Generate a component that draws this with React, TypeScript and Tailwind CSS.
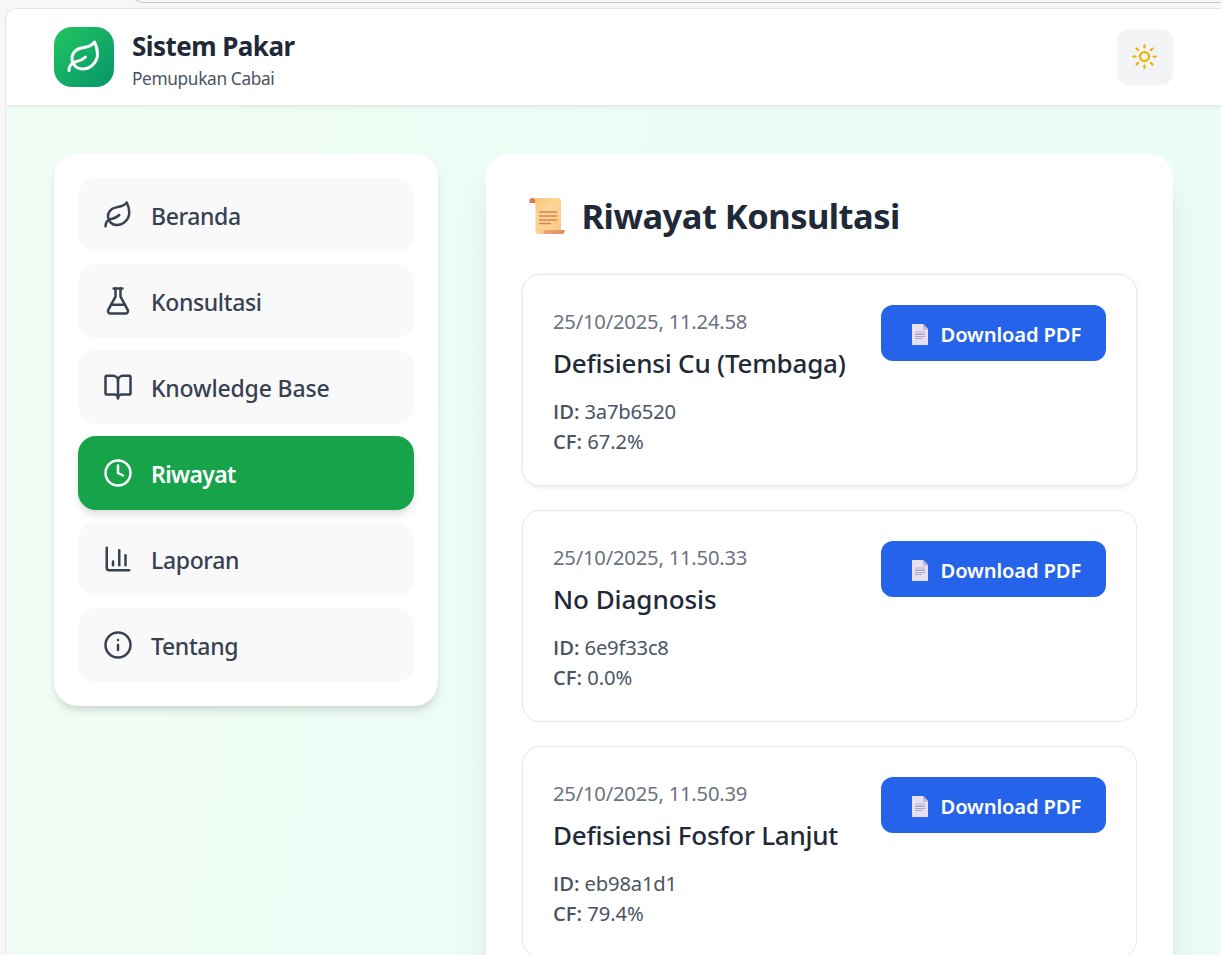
import { BookOpen, ChartColumn, Clock, FlaskConical, Info, Leaf, Sun, type LucideIcon } from "lucide-react";

type NavItem = { label: string; icon: LucideIcon; tracking: string; active?: boolean };

const navItems: NavItem[] = [
  { label: "Beranda", icon: Leaf, tracking: "tracking-[-0.4px]" },
  { label: "Konsultasi", icon: FlaskConical, tracking: "tracking-[-0.35px]" },
  { label: "Knowledge Base", icon: BookOpen, tracking: "tracking-[-0.17px]" },
  { label: "Riwayat", icon: Clock, tracking: "tracking-[-0.65px]", active: true },
  { label: "Laporan", icon: ChartColumn, tracking: "tracking-[-0.35px]" },
  { label: "Tentang", icon: Info, tracking: "tracking-[-0.35px]" },
];

type Consultation = {
  date: string;
  diagnosis: string;
  id: string;
  cf: string;
  nameTracking: string;
  idTracking: string;
  raised?: boolean;
};

const history: Consultation[] = [
  { date: "25/10/2025, 11.24.58", diagnosis: "Defisiensi Cu (Tembaga)", id: "3a7b6520", cf: "67.2%", nameTracking: "tracking-[-0.22px]", idTracking: "tracking-[-0.22px]", raised: true },
  { date: "25/10/2025, 11.50.33", diagnosis: "No Diagnosis", id: "6e9f33c8", cf: "0.0%", nameTracking: "tracking-[-0.06px]", idTracking: "tracking-[-0.2px]" },
  { date: "25/10/2025, 11.50.39", diagnosis: "Defisiensi Fosfor Lanjut", id: "eb98a1d1", cf: "79.4%", nameTracking: "tracking-[-0.25px]", idTracking: "tracking-[-0.18px]" },
];

function ScrollIcon() {
  return (
    <svg width="36" height="36" viewBox="0 0 36 36" className="shrink-0" aria-hidden="true">
      <defs>
        <linearGradient id="paper" x1="0" y1="0" x2="1" y2="1">
          <stop offset="0" stopColor="#fbc475" />
          <stop offset="0.45" stopColor="#fdd597" />
          <stop offset="1" stopColor="#fbc881" />
        </linearGradient>
        <linearGradient id="roll" x1="0" y1="0" x2="1" y2="0">
          <stop offset="0" stopColor="#f0a873" />
          <stop offset="1" stopColor="#e08a63" />
        </linearGradient>
      </defs>
      <path d="M3 0h25.500c2.200 0 3.500 1.300 3.500 3.500V33c0 2-1.200 3-3 3H9.500C7.500 36 6.500 35 6.500 33V4.500C6.500 1.500 5.500 0 3 0Z" fill="url(#paper)" />
      <path d="M3.4 0C5.500 0 6.500 2 6.500 5H.6C-.2 2 .8 0 3.4 0Z" fill="#d27c58" />
      <path d="M15 32h20.600c.5 2.500-.6 4-3 4H12c1.800 0 3-1.300 3-4Z" fill="url(#roll)" />
      <path d="M10 14h18M10 18h18M10 22h18M10 25.500h12" stroke="#d9845c" strokeWidth="1.400" />
    </svg>
  );
}

function DocumentIcon() {
  return (
    <svg width="16" height="21" viewBox="0 0 16 21" className="shrink-0" aria-hidden="true">
      <path d="M0 .5Q0 0 .5 0H11l5 5v15.500q0 .5-.5.500H.5Q0 21 0 20.500Z" fill="#e6dff2" />
      <path d="M11 0l5 5v.700h-4.200q-.8 0-.8-.8Z" fill="#c2b9cf" />
      <path d="M3 7h10v3.200H3Z" fill="#cfc7da" />
      <path d="M3 10.500h10M3 12.500h10M3 14.500h7" stroke="#a69db3" strokeWidth="0.900" />
    </svg>
  );
}

function Header() {
  return (
    <header className="z-10 flex h-[97px] shrink-0 items-center justify-between border-b border-gray-200 bg-white px-12 shadow-[0_1.5px_3px_rgba(0,0,0,0.05)]">
      <div className="flex items-center gap-[18px]">
        <div className="flex size-[60px] items-center justify-center rounded-[18px] bg-linear-to-br from-[#22c55e] to-[#059669]">
          <Leaf size={36} strokeWidth={2} className="text-white" />
        </div>
        <div className="pt-[7px]">
          <h1 className="text-[26px] leading-9 font-bold tracking-[-0.55px] text-[#1f2937]">Sistem Pakar</h1>
          <p className="text-[17.3px] leading-[29px] tracking-[-0.36px] text-[#4b5563]">Pemupukan Cabai</p>
        </div>
      </div>
      <button className="flex size-14 items-center justify-center rounded-xl bg-[#f3f4f6]" aria-label="Tema">
        <Sun size={27} className="mr-px mb-px text-[#eab308]" />
      </button>
    </header>
  );
}

function Sidebar() {
  return (
    <nav className="flex w-96 shrink-0 flex-col gap-3 self-start rounded-3xl bg-white p-6 shadow-[0_6px_9px_-1.500px_rgba(0,0,0,0.1),0_3px_6px_-3px_rgba(0,0,0,0.1)]">
      {navItems.map(({ label, icon: Icon, tracking, active }) => (
        <button
          key={label}
          className={`flex h-[74px] items-center gap-[18px] rounded-[18px] pl-[25px] text-[23px] ${
            active
              ? "bg-[#16a34a] font-semibold text-white shadow-[0_6px_9px_-1.500px_rgba(0,0,0,0.1),0_3px_6px_-3px_rgba(0,0,0,0.1)]"
              : "bg-[#f9f9f9] font-medium text-[#374151]"
          }`}
        >
          <Icon size={30} strokeWidth={2} />
          <span className={`pt-[2px] leading-9 ${tracking}`}>{label}</span>
        </button>
      ))}
    </nav>
  );
}

function HistoryCard({ item }: { item: Consultation }) {
  return (
    <article
      className={`flex h-[212px] items-start justify-between rounded-[18px] border border-gray-200 px-[30px] pt-[30px] ${
        item.raised ? "shadow-[0_1.5px_4px_rgba(0,0,0,0.07)]" : ""
      }`}
    >
      <div className="pt-[0.5px] text-[20.2px] leading-[30px] text-[#4b5563]">
        <p className="tracking-[-0.2px] text-[#6b7280]">{item.date}</p>
        <h3 className={`mt-[7px] mb-[13.500px] text-[26px] leading-10 font-medium text-[#1f2937] ${item.nameTracking}`}>{item.diagnosis}</h3>
        <p className={item.idTracking}>
          <span className="font-['Open_Sans'] font-semibold tracking-normal">ID:</span> {item.id}
        </p>
        <p className="tracking-[-0.1px]">
          <span className="font-['Open_Sans'] font-semibold tracking-normal">CF:</span> {item.cf}
        </p>
      </div>
      <button className="flex h-14 w-[225px] shrink-0 items-center gap-[12.500px] rounded-xl bg-[#2563eb] pt-[2px] pl-[31px] text-[20.2px] font-semibold tracking-[-0.14px] text-white">
        <DocumentIcon />
        <span className="whitespace-nowrap">Download PDF</span>
      </button>
    </article>
  );
}

export default function App() {
  return (
    <div className="h-[955px] w-[1221px] overflow-hidden bg-[#f7f7f7] font-['Noto_Sans',sans-serif]">
      <div className="-mt-[27px] ml-[128px] h-[30px] rounded-bl-[16px] border-b border-l border-[#c8c8c8]" />
      <div className="mt-[5px] ml-[5px] flex h-[960px] flex-col overflow-hidden rounded-tl-xl border-t border-l border-[#e5e5e5] bg-[linear-gradient(100deg,#f0fdf4_10%,#eafcf4_60%)]">
        <Header />
        <main className="flex items-start gap-12 p-12">
          <Sidebar />
          <section className="w-[687px] shrink-0 rounded-3xl bg-white p-9 shadow-[0_30px_37.500px_-7.500px_rgba(0,0,0,0.1),0_12px_15px_-9px_rgba(0,0,0,0.1)]">
            <div className="mb-[33px] flex h-[51px] items-center gap-[16.500px] pl-[7px]">
              <ScrollIcon />
              <h2 className="text-[34.500px] leading-[51px] font-bold tracking-[-0.52px] text-[#1f2937]">Riwayat Konsultasi</h2>
            </div>
            <div className="flex flex-col gap-6">
              {history.map((item) => (
                <HistoryCard key={item.date} item={item} />
              ))}
            </div>
          </section>
        </main>
      </div>
    </div>
  );
}
